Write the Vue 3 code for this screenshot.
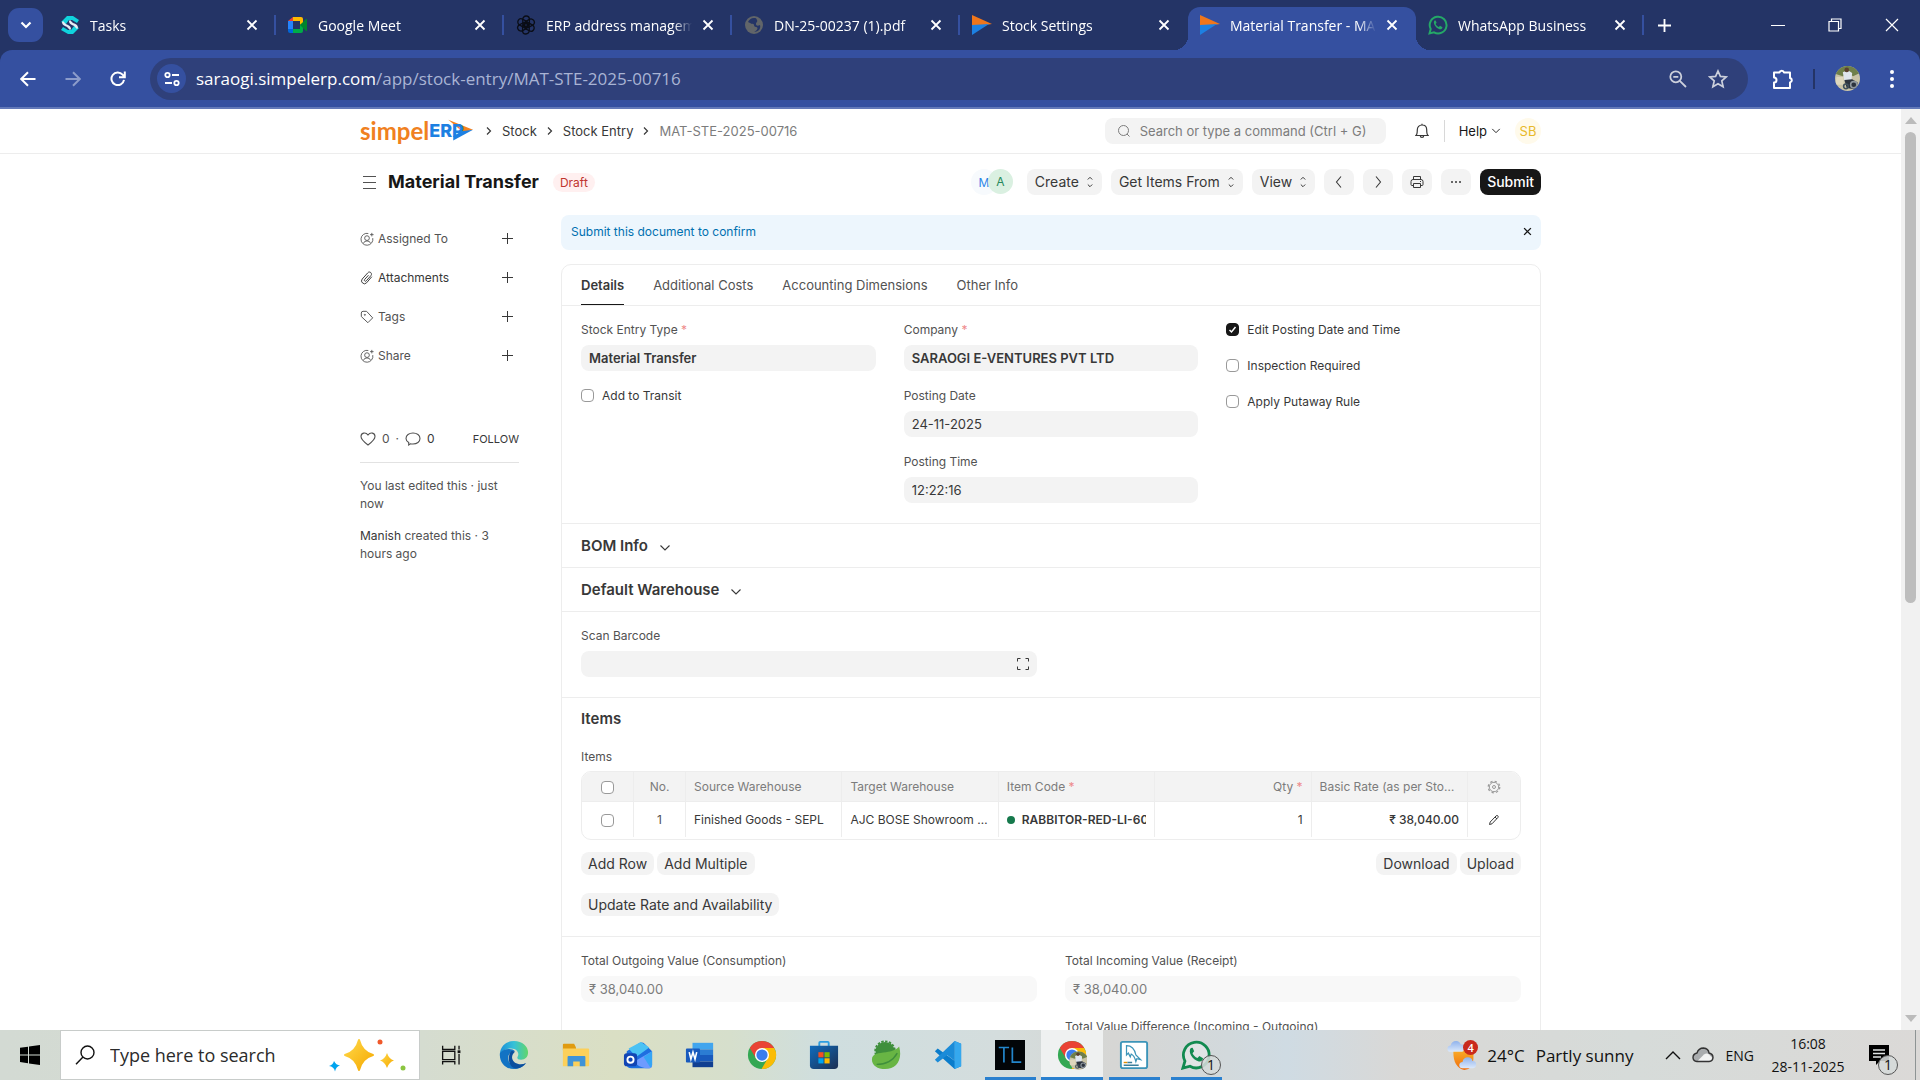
<script setup>
import { ref } from 'vue'

const browserTabs = [
  { icon: 'tasks', title: 'Tasks' },
  { icon: 'meet', title: 'Google Meet' },
  { icon: 'gpt', title: 'ERP address management' },
  { icon: 'globe', title: 'DN-25-00237 (1).pdf' },
  { icon: 'play', title: 'Stock Settings', last: true },
  { icon: 'play', title: 'Material Transfer - MAT-STE', active: true },
  { icon: 'whatsapp', title: 'WhatsApp Business' },
]

const sidebar = [
  { icon: 'assign', label: 'Assigned To' },
  { icon: 'clip', label: 'Attachments', strong: true },
  { icon: 'tag', label: 'Tags' },
  { icon: 'assign', label: 'Share' },
]

const formTabs = ['Details', 'Additional Costs', 'Accounting Dimensions', 'Other Info']
const menus = ['Create', 'Get Items From', 'View']
const tools = [
  { icon: 'left', label: 'Previous' },
  { icon: 'right', label: 'Next' },
  { icon: 'print', label: 'Print' },
  { icon: 'dots', label: 'Menu' },
]

const checks = ref([
  { id: 'edit-posting', label: 'Edit Posting Date and Time', on: true },
  { id: 'inspection', label: 'Inspection Required', on: false },
  { id: 'putaway', label: 'Apply Putaway Rule', on: false },
])

const apps = [
  { icon: 'taskview', label: 'Task View' },
  { icon: 'edge', label: 'Edge' },
  { icon: 'folder', label: 'File Explorer' },
  { icon: 'outlook', label: 'Outlook' },
  { icon: 'word', label: 'Word' },
  { icon: 'chrome', label: 'Chrome' },
  { icon: 'store', label: 'Store' },
  { icon: 'spring', label: 'Spring' },
  { icon: 'vscode', label: 'VS Code' },
  { icon: 'tl', label: 'TL', open: true },
  { icon: 'chromeuser', label: 'Chrome profile', open: true, active: true },
  { icon: 'mysql', label: 'MySQL Installer', open: true },
  { icon: 'whatsappfill', label: 'WhatsApp', open: true, count: 1 },
]

const entryType = ref('Material Transfer')
const company = ref('SARAOGI E-VENTURES PVT LTD')
const postingDate = ref('24-11-2025')
const postingTime = ref('12:22:16')
const barcode = ref('')
</script>

<template>
  <div class="screen">
    <svg class="sprite" aria-hidden="true">
      <defs>
        <linearGradient id="g-edge" x1="0" y1="0" x2="1" y2="0"><stop offset="0" stop-color="#1b8fd8" /><stop offset="0.5" stop-color="#35c1d8" /><stop offset="1" stop-color="#62d66a" /></linearGradient>
        <linearGradient id="g-spark" x1="0" y1="0" x2="1" y2="1"><stop offset="0" stop-color="#ffd94a" /><stop offset="1" stop-color="#f5a800" /></linearGradient>
        <linearGradient id="g-store" x1="0" y1="0" x2="1" y2="1"><stop offset="0" stop-color="#0f6cbd" /><stop offset="1" stop-color="#1d2f52" /></linearGradient>
        <linearGradient id="g-sun" x1="0" y1="0" x2="0" y2="1"><stop offset="0" stop-color="#fbb62d" /><stop offset="1" stop-color="#ef6c0c" /></linearGradient>
        <linearGradient id="g-cloud" x1="0" y1="0" x2="0" y2="1"><stop offset="0" stop-color="#8fb2ec" /><stop offset="1" stop-color="#dce9fb" /></linearGradient>
        <clipPath id="c-face"><circle cx="16" cy="16" r="16" /></clipPath>
      </defs>
      <symbol id="i-tasks" viewBox="0 0 20 20"><path d="M1 7 7 1h6l6 4-2 3-5-3H9L6 9z" fill="#10d3dd" /><path d="m19 13-6 6H8l-7-4 2-3 5 3h3l3-4z" fill="#10d3dd" /><path d="M2 7c0 3 3 4 5 5l3 3 1-1c0-3-3-4-5-5L3 6zM18 13c0-3-2-4-5-5l-3-3-1 1c0 3 3 4 5 5l3 3z" fill="#e8ecf4" /></symbol>
      <symbol id="i-meet" viewBox="0 0 20 20"><path d="M5 2h8q2 0 2 2v4l-3 2V6H5z" fill="#ffba00" /><path d="m5 2-5 4h5z" fill="#ea4335" /><path d="M0 6h5v8H0z" fill="#2684fc" /><path d="M0 14h5v4H2q-2 0-2-2z" fill="#0066da" /><path d="M5 14h7v-4l3-2v8q0 2-2 2H5z" fill="#00ac47" /><path d="m12 10 6-6q1-.5 1 .5v11q0 1-1 .5z" fill="#00832d" /></symbol>
      <symbol id="i-gpt" viewBox="0 0 20 20"><g fill="none" stroke="#0a0d16" stroke-width="1.300"><rect id="loop" x="6.800" y="1" width="6.600" height="10.500" rx="3.300" /><use href="#loop" transform="rotate(60 10 10)" /><use href="#loop" transform="rotate(120 10 10)" /><use href="#loop" transform="rotate(180 10 10)" /><use href="#loop" transform="rotate(240 10 10)" /><use href="#loop" transform="rotate(300 10 10)" /></g></symbol>
      <symbol id="i-globe" viewBox="0 0 20 20"><circle cx="10" cy="10" r="9" fill="#616569" /><path d="M10 3c-3 0-5 2-6 4l4 2c3-1 1 3 4 3s1 4-2 5c5 0 7-4 6-7-2 1-4 1-4-1s2-2 1-4-1-2-3-2z" fill="#243466" /></symbol>
      <symbol id="i-play" viewBox="0 0 20 20"><path d="M0 0v12l20-3z" fill="#f0761b" /><path d="M0 10v10L17 9z" fill="#1d80e2" /></symbol>
      <symbol id="i-whatsapp" viewBox="0 0 20 20"><path d="m1.500 18.500 1.200-4.500A8.400 8.400 0 1 1 6 17.400z" fill="none" stroke="#25a867" stroke-width="2" /><path d="M6.500 5.500C4.500 8 7.500 13 11.500 14.200c1.500.4 3-.8 3-2l-2.500-1.400-1.200 1.300c-1.500-.6-2.500-1.700-3.200-3.100l1-1.200-1-2.400z" fill="#25a867" /></symbol>
      <symbol id="i-whatsappfill" viewBox="0 0 32 32"><path d="m2 30 2.200-7.500A13.700 13.700 0 1 1 9.600 28z" fill="#fff" fill-opacity="0.300" stroke="#128a50" stroke-width="3" /><path d="M10.500 8.500c-3.500 4 1.500 12.500 8.500 14.300 2.500.5 4.500-1.300 4.500-3.300L19.600 17l-2 2.200c-2.600-1-4.300-2.900-5.300-5.100l1.700-2-1.600-3.800z" fill="#128a50" /></symbol>

      <symbol id="i-close" viewBox="0 0 12 12"><path d="m1.500 1.500 9 9m0-9-9 9" fill="none" stroke="currentColor" stroke-width="1.800" /></symbol>
      <symbol id="i-thinclose" viewBox="0 0 14 14"><path d="m1 1 12 12M13 1 1 13" fill="none" stroke="currentColor" stroke-width="1.200" /></symbol>
      <symbol id="i-restore" viewBox="0 0 14 14"><path d="M1 3.500h9.500V13H1zM3.500 3.500V1H13v9.500h-2.500" fill="none" stroke="currentColor" stroke-width="1.200" /></symbol>
      <symbol id="i-down" viewBox="0 0 12 12"><path d="m1.500 3.500 4.500 4.500 4.500-4.500" fill="none" stroke="currentColor" stroke-width="1.100" /></symbol>
      <symbol id="i-downbold" viewBox="0 0 12 12"><path d="m1.500 3.500 4.500 4.500 4.500-4.500" fill="none" stroke="currentColor" stroke-width="2.200" /></symbol>
      <symbol id="i-plus" viewBox="0 0 13 13"><path d="M6.500 1v11M1 6.500h11" fill="none" stroke="currentColor" /></symbol>
      <symbol id="i-plusbold" viewBox="0 0 14 14"><path d="M7 0v14M0 7h14" fill="none" stroke="currentColor" stroke-width="2" /></symbol>
      <symbol id="i-back" viewBox="0 0 16 16"><path d="M15.500 8H1.500M8 1.200 1.200 8 8 14.800" fill="none" stroke="currentColor" stroke-width="2" /></symbol>
      <symbol id="i-forward" viewBox="0 0 16 16"><path d="M.5 8h14M8 1.200 14.800 8 8 14.800" fill="none" stroke="currentColor" stroke-width="2" /></symbol>
      <symbol id="i-reload" viewBox="0 0 16 16"><path d="M14 8.800A6.300 6.300 0 1 1 12.600 3.700L14 5.200M14.800.5v5.800H9" fill="none" stroke="currentColor" stroke-width="2" /></symbol>
      <symbol id="i-tune" viewBox="0 0 16 16"><g fill="none" stroke="currentColor" stroke-width="1.800"><circle cx="3.500" cy="4" r="2.200" /><path d="M8 4h7M1 12h7" /><circle cx="12.500" cy="12" r="2.200" /></g></symbol>
      <symbol id="i-zoomout" viewBox="0 0 18 18"><g fill="none" stroke="currentColor" stroke-width="1.800"><circle cx="6.800" cy="6.800" r="5.500" /><path d="m10.800 10.800 6.200 6.200M4.300 6.800h5" /></g></symbol>
      <symbol id="i-star" viewBox="0 0 20 20"><path d="m10 2 2.400 5.400 5.800.6-4.400 3.900 1.300 5.800L10 14.700l-5.100 3 1.300-5.800L1.800 8l5.800-.6z" fill="none" stroke="currentColor" stroke-width="1.700" /></symbol>
      <symbol id="i-puzzle" viewBox="0 0 22 22"><path d="M2 4.500h5.500a2.300 2.300 0 0 1 4.500 0h6V10a2.300 2.300 0 0 1 0 4.500V20H2v-5.500a2.500 2.500 0 0 0 0-5z" fill="none" stroke="currentColor" stroke-width="2" stroke-linejoin="round" /></symbol>
      <symbol id="i-kebab" viewBox="0 0 6 20"><g fill="currentColor"><circle cx="3" cy="3" r="2" /><circle cx="3" cy="10" r="2" /><circle cx="3" cy="17" r="2" /></g></symbol>
      <symbol id="i-face" viewBox="0 0 32 32"><g clip-path="url(#c-face)"><rect width="32" height="32" fill="#c9c3a6" /><path d="M0 0h32v9l-9 4-7-5-6 5L0 10z" fill="#6f7f4a" /><path d="M2 14h9v10H0z" fill="#ded7bd" /><path d="m10 8 6-3 6 4-1 9-9 1z" fill="#dfe5ee" /><circle cx="15" cy="5" r="3" fill="#5a4030" /><path d="m12 18 10-1 7 4-2 9-12-2z" fill="#2c333e" /><circle cx="24" cy="24" r="4" fill="none" stroke="#8e979e" stroke-width="2" /><circle cx="14" cy="26" r="3" fill="none" stroke="#40505c" stroke-width="2" /></g></symbol>

      <symbol id="i-logo" viewBox="0 0 34 26"><path d="M4 0 34 12 22 15z" fill="#f58220" /><path d="M20 14 34 12 10 25V20z" fill="#1d80e2" /></symbol>
      <symbol id="i-chev" viewBox="0 0 8 12"><path d="m2 2.500 3.500 3.500L2 9.500" fill="none" stroke="currentColor" stroke-width="1.200" /></symbol>
      <symbol id="i-search" viewBox="0 0 14 14"><g fill="none" stroke="currentColor"><circle cx="6.500" cy="6.500" r="5" /><path d="m10 10 2.500 2.500" /></g></symbol>
      <symbol id="i-bell" viewBox="0 0 14 16"><path d="M1 12.500h12c-1.200-1-1.300-2.500-1.300-5.700C11.700 4 9.800 2 7 2S2.300 4 2.300 6.800c0 3.200-.1 4.700-1.300 5.700zM5.300 12.800c0 2.200 3.400 2.200 3.400 0M7 2V.8" fill="none" stroke="currentColor" stroke-width="1.200" /></symbol>
      <symbol id="i-select" viewBox="0 0 8 12"><path d="M1.800 3.500 4 1.300 6.200 3.500M1.800 8.500 4 10.700 6.200 8.500" fill="none" stroke="currentColor" /></symbol>
      <symbol id="i-left" viewBox="0 0 14 14"><path d="M9 1.500 4.500 7 9 12.500" fill="none" stroke="currentColor" stroke-width="1.100" /></symbol>
      <symbol id="i-right" viewBox="0 0 14 14"><path d="M5 1.500 9.500 7 5 12.500" fill="none" stroke="currentColor" stroke-width="1.100" /></symbol>
      <symbol id="i-print" viewBox="0 0 14 14"><path d="M3.500 4.500v-3h7v3M3.500 10.500H1.800Q1 10.500 1 9.500v-3q0-2 2-2h8q2 0 2 2v3q0 1-.8 1h-1.700M3.500 8.500h7v4h-7zM10 6.500h1" fill="none" stroke="currentColor" /></symbol>
      <symbol id="i-dots" viewBox="0 0 14 14"><g fill="currentColor"><circle cx="3" cy="7" r="1" /><circle cx="7" cy="7" r="1" /><circle cx="11" cy="7" r="1" /></g></symbol>
      <symbol id="i-assign" viewBox="0 0 16 16"><g fill="none" stroke="currentColor"><path d="M14.600 7A6.800 6.800 0 1 1 9.500 1.700M4 13q.5-2.800 4-2.800t4 2.800M13.500 1v4M11.500 3h4" /><circle cx="8" cy="7" r="2.700" /></g></symbol>
      <symbol id="i-clip" viewBox="0 0 16 16"><path d="m13.500 6.500-6 7a3.300 3.300 0 0 1-5-4.300l6.300-7a2.300 2.300 0 0 1 4 .3c.6 1 .3 2-.3 2.700l-5.300 6a1.200 1.200 0 0 1-2-1.400l4.500-5" fill="none" stroke="currentColor" stroke-width="1.100" /></symbol>
      <symbol id="i-tag" viewBox="0 0 16 16"><path d="M1.500 3.500q0-2 2-2h4l7 7.500-5.500 5.500-7.500-7zM5.500 5a.6.600 0 1 0 .1 0z" fill="none" stroke="currentColor" stroke-width="1.100" /></symbol>
      <symbol id="i-heart" viewBox="0 0 16 14"><path d="M8 13C4 10 1 7.500 1 4.500 1 1 5.500-.5 8 3c2.500-3.500 7-2 7 1.500 0 3-3 5.500-7 8.500z" fill="none" stroke="currentColor" stroke-width="1.100" /></symbol>
      <symbol id="i-comment" viewBox="0 0 16 14"><path d="M3.700 13v-2.600C2 9.500 1 8 1 6.500 1 3.300 4 1 8 1s7 2.300 7 5.500S12 12 8 12c-.8 0-2 0-2.600-.2z" fill="none" stroke="currentColor" stroke-width="1.100" /></symbol>
      <symbol id="i-scan" viewBox="0 0 14 14"><path d="M1.500 4.500v-3h3M9.500 1.500h3v3M12.500 9.500v3h-3M4.500 12.500h-3v-3" fill="none" stroke="currentColor" /></symbol>
      <symbol id="i-gear" viewBox="0 0 14 14"><g fill="none" stroke="currentColor"><circle cx="7" cy="7" r="4.700" /><circle cx="7" cy="7" r="5.800" stroke-width="1.200" stroke-dasharray="2.300 2.250" /><circle cx="7" cy="7" r="1.500" /></g></symbol>
      <symbol id="i-pencil" viewBox="0 0 12 12"><path d="M1.500 10.500 2.200 8l6-6.200q.8-.7 1.600 0t.1 1.700L4 9.800zM7 3l2 2" fill="none" stroke="currentColor" /></symbol>

      <symbol id="i-windows" viewBox="0 0 20 20"><path d="M0 2.800 8 1.700v7.700H0zM9 1.500 20 0v9.400H9zM0 10.400h8v7.800L0 17zM9 10.400h11V20L9 18.400z" fill="#000" /></symbol>
      <symbol id="i-bigsearch" viewBox="0 0 20 20"><g fill="none" stroke="#111" stroke-width="1.400"><circle cx="12.500" cy="7.500" r="6.500" /><path d="M8 12 1 19.300" /></g></symbol>
      <symbol id="i-sparkle" viewBox="0 0 78 34"><path d="M30 2q3 12 14 15-11 3-14 15-3-12-14-15 11-3 14-15z" fill="url(#g-spark)" stroke="url(#g-spark)" stroke-width="2" stroke-linejoin="round" /><path d="M58 15q2 6 7 7.500-5 1.500-7 7.500-2-6-7-7.500 5-1.500 7-7.500z" fill="url(#g-spark)" /><path d="M5 23q2 4 6 4.500-4 1-5 6-1-5-6-5.500 4-1 5-5z" fill="#00a4ef" /><circle cx="51" cy="4" r="2.500" fill="#f0592b" /><circle cx="74" cy="30" r="2.500" fill="#8bc540" /></symbol>
      <symbol id="i-taskview" viewBox="0 0 32 32"><g fill="none" stroke="#111" stroke-width="1.400"><path d="M6 6v4h13V6M6 26v-3h13v3M6 12h13v9H6zM23.500 6v4M23.500 15v11" /></g><path d="M22 11h3v3h-3z" fill="#111" /></symbol>
      <symbol id="i-edge" viewBox="0 0 32 32"><path d="M1 14C2 6 8 1 16 1c9 0 15 6 15 12 0 5-3 8-7.500 8-4 0-4.500-2-3.500-3.500C22 14 19 9 13 9 7 9 2 12 1 17z" fill="url(#g-edge)" /><path d="M1 14c3-5 13-6 16-2-5 0-8 4-7 9 1 6 8 9 18 4-3 4-7 6-12 6C7 31 0 24 1 14z" fill="#1273c4" /><path d="M13 12c-4 4-4 17 5 18.500 5-.5 9-3 11-6-6 3-14 1-15-5-.4-3 1-5 3-7-1-1-3-1-4-.5z" fill="#0b4f9e" /></symbol>
      <symbol id="i-folder" viewBox="0 0 32 32"><path d="M2 5q0-1 1-1h11l2 4v3H2z" fill="#e09b10" /><path d="M2 9h27q1 0 1 1v17q0 1-1 1H2z" fill="#fcd05a" /><path d="M7 28V18q0-1 1-1h17q1 0 1 1v10h-6v-5h-7v5z" fill="#3f93d8" /></symbol>
      <symbol id="i-outlook" viewBox="0 0 32 32"><path d="m4 12 14-9q3-1 5 1l8 8v15q0 3-3 3H9q-5 0-5-4z" fill="#1d6fe0" /><path d="m6 9 13-7 9 6-14 10z" fill="#4ac2f4" /><path d="m31 12-19 11q4 6 12 7h4q3 0 3-3z" fill="#6e9bff" /><path d="m31 12-9 6 7 11q2-1 2-3z" fill="#35a5f5" /><rect x="1" y="14" width="14" height="14" rx="3" fill="#1245b4" /><circle cx="8" cy="21" r="3.300" fill="none" stroke="#fff" stroke-width="2" /></symbol>
      <symbol id="i-word" viewBox="0 0 32 32"><path d="M8 3h22v7H8z" fill="#41a5ee" /><path d="M8 10h22v6H8z" fill="#2b7cd3" /><path d="M8 16h22v7H8z" fill="#185abd" /><path d="M8 23h22v6H8z" fill="#103f91" /><rect x="1" y="9" width="15" height="15" rx="1" fill="#185abd" /><path d="m4.500 13 1.800 7.500L8.500 13l2.200 7.500 1.800-7.500" fill="none" stroke="#fff" stroke-width="1.700" /></symbol>
      <symbol id="i-chrome" viewBox="0 0 32 32"><circle cx="16" cy="16" r="15" fill="#34a853" /><path d="M3 8.500A15 15 0 0 1 29 8.500H16l-6.500 11z" fill="#ea4335" /><path d="M29 8.500A15 15 0 0 1 15.500 31L22.500 19 16 8.500z" fill="#fbbc05" /><circle cx="16" cy="16" r="7.500" fill="#fff" /><circle cx="16" cy="16" r="6" fill="#3b7ded" /></symbol>
      <symbol id="i-chromeuser" viewBox="0 0 32 32"><use href="#i-chrome" width="32" height="32" /><use href="#i-face" x="13" y="12" width="20" height="20" /></symbol>
      <symbol id="i-store" viewBox="0 0 32 32"><path d="M11 7V3q0-1 1-1h8q1 0 1 1v4" fill="none" stroke="#2c9de0" stroke-width="2" /><path d="M1 6h30v21q0 4-4 4H5q-4 0-4-4z" fill="url(#g-store)" /><path d="M10 13h5.500v5.500H10z" fill="#f25022" /><path d="M16.500 13H22v5.500h-5.500z" fill="#7fba00" /><path d="M10 19.500h5.500V25H10z" fill="#00a4ef" /><path d="M16.500 19.500H22V25h-5.500z" fill="#ffb900" /></symbol>
      <symbol id="i-spring" viewBox="0 0 32 32"><circle cx="15" cy="12" r="10" fill="#3f8f3c" /><circle cx="15" cy="12" r="10.500" fill="none" stroke="#3f8f3c" stroke-width="2" stroke-dasharray="2.600 1.500" /><path d="M30 7c4 14-3 24-15 24C7 31 1 27 1 21c0-7 7-7 15-8 6-1 11-2 14-6z" fill="#68b544" /><path d="M6 26c9 0 17-3 22-12" fill="none" stroke="#3f8f3c" stroke-width="1.500" /></symbol>
      <symbol id="i-vscode" viewBox="0 0 32 32"><path d="m23 1 7 3v24l-7 3L2 12l3-3 18 13z" fill="#0a7ccb" /><path d="m23 1 7 3v24l-7 3z" fill="#35a8ee" /><path d="M23 10v12l-8-6zM23 1v9L5 24l-3-3z" fill="#1b8bd8" /></symbol>
      <symbol id="i-tl" viewBox="0 0 32 32"><path d="M0 0h32v32H0z" fill="#020508" /><path d="M4 8h11M9.500 8v16M18.500 8v15.500H28" fill="none" stroke="#2386cc" stroke-width="1.800" /></symbol>
      <symbol id="i-mysql" viewBox="0 0 32 32"><rect x="2" y="2" width="28" height="28" rx="2" fill="#fff" stroke="#3c94b8" stroke-width="2" /><path d="M8 16V6c6 0 9 5 10 10l5 5-4-1-1 3c-1-4-3-7-5-8l-1 3-2-4z" fill="none" stroke="#3c94b8" stroke-width="1.300" /><path d="M5 24h4" stroke="#e48e00" stroke-width="1.500" /><path d="M9 24h5M5 27h16" stroke="#3c7f9c" stroke-width="1.500" /></symbol>
      <symbol id="i-weather" viewBox="0 0 34 34"><path d="M7 8h22v12q0 12-10 13Q7 30 7 14z" fill="url(#g-sun)" /><path d="M4 13q-4 0-3.500-4Q1 6 4 6q1-5 6-5 4 0 5 4 4-1 4 4 0 4-4 4z" fill="url(#g-cloud)" /><path d="M17 31q-4 0-3.500-4 .5-3 3.500-3 1-5 6-5 4 0 5 4 4 0 4 4t-4 4z" fill="url(#g-cloud)" /></symbol>
      <symbol id="i-caret" viewBox="0 0 16 10"><path d="m1 9 7-7 7 7" fill="none" stroke="#111" stroke-width="1.400" /></symbol>
      <symbol id="i-cloud" viewBox="0 0 22 16"><path d="M5 14.500q-4-.5-4-4T5 6q1.500-5 6.500-5 5 .5 5.500 5 4 1 4 4.500t-4 4z" fill="#a9acae" stroke="#333" stroke-width="1.400" /><path d="m6 13.500 6-6q3-2 5 0l3 3q0 3-3 3z" fill="#f2f3f3" /></symbol>
      <symbol id="i-note" viewBox="0 0 20 20"><path d="M0 0h20v16h-9l-4 4v-4H0z" fill="#000" /><path d="M4 5h12M4 8.500h12M4 12h8" stroke="#e0e4e4" stroke-width="1.300" /></symbol>
    </svg>

    <header class="browser">
      <div class="strip">
        <button class="tab-search" aria-label="Search tabs"><svg width="12" height="12"><use href="#i-downbold" /></svg></button>
        <nav class="tabs" aria-label="Browser tabs">
          <div v-for="(t, i) in browserTabs" :key="i" class="tab" :class="{ active: t.active, last: t.last }">
            <svg width="20" height="20"><use :href="'#i-' + t.icon" /></svg>
            <span class="tab-title">{{ t.title }}</span>
            <button class="plain" aria-label="Close tab"><svg width="12" height="12"><use href="#i-close" /></svg></button>
          </div>
        </nav>
        <button class="plain new-tab" aria-label="New tab"><svg width="13" height="13"><use href="#i-plusbold" /></svg></button>
        <div class="window-controls">
          <button class="plain" aria-label="Minimize"><span class="dash"></span></button>
          <button class="plain" aria-label="Restore"><svg width="14" height="14"><use href="#i-restore" /></svg></button>
          <button class="plain" aria-label="Close window"><svg width="14" height="14"><use href="#i-thinclose" /></svg></button>
        </div>
      </div>
      <div class="toolbar">
        <button class="plain nav-btn" aria-label="Back"><svg width="16" height="16"><use href="#i-back" /></svg></button>
        <button class="plain nav-btn dim" aria-label="Forward"><svg width="16" height="16"><use href="#i-forward" /></svg></button>
        <button class="plain nav-btn" aria-label="Reload"><svg width="16" height="16"><use href="#i-reload" /></svg></button>
        <div class="omnibox">
          <button class="site" aria-label="Site information"><svg width="16" height="16"><use href="#i-tune" /></svg></button>
          <span class="url"><b>saraogi.simpelerp.com</b>/app/stock-entry/MAT-STE-2025-00716</span>
          <button class="plain omni-icon" aria-label="Zoom"><svg width="18" height="18"><use href="#i-zoomout" /></svg></button>
          <button class="plain omni-icon" aria-label="Bookmark"><svg width="20" height="20"><use href="#i-star" /></svg></button>
        </div>
        <button class="plain ext" aria-label="Extensions"><svg width="22" height="22"><use href="#i-puzzle" /></svg></button>
        <span class="bar"></span>
        <button class="plain me" aria-label="Profile"><svg width="25" height="25"><use href="#i-face" /></svg></button>
        <button class="plain kebab" aria-label="More"><svg width="6" height="20"><use href="#i-kebab" /></svg></button>
      </div>
    </header>

    <div class="viewport">
      <div class="page">
        <div class="navbar">
          <div class="wrap navbar-in">
            <a class="logo" href="#"><span class="simpel">simpel</span><span class="erp">ERP</span><svg width="28" height="23"><use href="#i-logo" /></svg></a>
            <nav class="crumbs" aria-label="Breadcrumb">
              <svg width="8" height="12"><use href="#i-chev" /></svg><a href="#">Stock</a>
              <svg width="8" height="12"><use href="#i-chev" /></svg><a href="#">Stock Entry</a>
              <svg width="8" height="12"><use href="#i-chev" /></svg><a href="#" class="here">MAT-STE-2025-00716</a>
            </nav>
            <div class="search">
              <svg width="14" height="14"><use href="#i-search" /></svg>
              <input type="text" aria-label="Search" placeholder="Search or type a command (Ctrl + G)" />
            </div>
            <button class="plain bell" aria-label="Notifications"><svg width="14" height="16"><use href="#i-bell" /></svg></button>
            <button class="plain help">Help <svg width="10" height="10"><use href="#i-down" /></svg></button>
            <span class="avatar sb">SB</span>
          </div>
        </div>

        <div class="wrap head">
          <button class="plain burger" aria-label="Toggle sidebar"><i></i><i></i><i></i></button>
          <h1>Material Transfer</h1>
          <span class="badge">Draft</span>
          <div class="actions">
            <div class="viewers"><span class="avatar m">M</span><span class="avatar a">A</span></div>
            <button v-for="m in menus" :key="m" class="btn">{{ m }} <svg width="8" height="12"><use href="#i-select" /></svg></button>
            <button v-for="t in tools" :key="t.icon" class="btn square" :aria-label="t.label"><svg width="14" height="14"><use :href="'#i-' + t.icon" /></svg></button>
            <button class="btn primary">Submit</button>
          </div>
        </div>

        <div class="wrap body">
          <aside class="side">
            <ul class="side-list">
              <li v-for="s in sidebar" :key="s.label" :class="{ strong: s.strong }">
                <svg width="14" height="14"><use :href="'#i-' + s.icon" /></svg>
                <span>{{ s.label }}</span>
                <button class="plain" :aria-label="'Add ' + s.label"><svg width="13" height="13"><use href="#i-plus" /></svg></button>
              </li>
            </ul>
            <div class="social">
              <svg width="16" height="14"><use href="#i-heart" /></svg><span>0</span><span>·</span>
              <svg width="16" height="14"><use href="#i-comment" /></svg><span class="dark">0</span>
              <a href="#">FOLLOW</a>
            </div>
            <p>You last edited this · just now</p>
            <p><b>Manish</b> created this · 3 hours ago</p>
          </aside>

          <main class="main">
            <div class="alert">
              <span>Submit this document to confirm</span>
              <button class="plain" aria-label="Dismiss"><svg width="9" height="9"><use href="#i-close" /></svg></button>
            </div>
            <form class="card" @submit.prevent>
              <div class="form-tabs">
                <a v-for="(t, i) in formTabs" :key="t" href="#" :class="{ on: i === 0 }">{{ t }}</a>
              </div>

              <section class="section cols three">
                <div class="col">
                  <div class="field">
                    <label for="entry-type">Stock Entry Type <em>*</em></label>
                    <input id="entry-type" v-model="entryType" class="control strong" type="text" />
                  </div>
                  <div class="check"><input id="transit" type="checkbox" /><label for="transit">Add to Transit</label></div>
                </div>
                <div class="col">
                  <div class="field">
                    <label for="company">Company <em>*</em></label>
                    <input id="company" v-model="company" class="control strong" type="text" />
                  </div>
                  <div class="field">
                    <label for="pdate">Posting Date</label>
                    <input id="pdate" v-model="postingDate" class="control" type="text" />
                  </div>
                  <div class="field">
                    <label for="ptime">Posting Time</label>
                    <input id="ptime" v-model="postingTime" class="control" type="text" />
                  </div>
                </div>
                <div class="col">
                  <div v-for="c in checks" :key="c.id" class="check">
                    <input :id="c.id" v-model="c.on" type="checkbox" /><label :for="c.id">{{ c.label }}</label>
                  </div>
                </div>
              </section>

              <section class="section fold"><h2>BOM Info</h2><svg width="12" height="12"><use href="#i-down" /></svg></section>
              <section class="section fold"><h2>Default Warehouse</h2><svg width="12" height="12"><use href="#i-down" /></svg></section>

              <section class="section cols">
                <div class="col">
                  <div class="field">
                    <label for="barcode">Scan Barcode</label>
                    <div class="control scan">
                      <input id="barcode" v-model="barcode" type="text" />
                      <button class="plain" type="button" aria-label="Scan"><svg width="14" height="14"><use href="#i-scan" /></svg></button>
                    </div>
                  </div>
                </div>
                <div class="col"></div>
              </section>

              <section class="section items">
                <h2>Items</h2>
                <p class="grid-label">Items</p>
                <div class="grid">
                  <table>
                    <colgroup><col class="c-edge" /><col class="c-edge" /><col /><col /><col /><col /><col /><col class="c-edge" /></colgroup>
                    <thead>
                      <tr>
                        <th class="mid"><input type="checkbox" aria-label="Select all rows" /></th>
                        <th class="mid">No.</th>
                        <th>Source Warehouse</th>
                        <th>Target Warehouse</th>
                        <th>Item Code <em>*</em></th>
                        <th class="num">Qty <em>*</em></th>
                        <th>Basic Rate (as per Stock UOM)</th>
                        <th class="mid"><svg class="gear" width="14" height="14"><use href="#i-gear" /></svg></th>
                      </tr>
                    </thead>
                    <tbody>
                      <tr>
                        <td class="mid"><input type="checkbox" aria-label="Select row 1" /></td>
                        <td class="mid soft">1</td>
                        <td>Finished Goods - SEPL</td>
                        <td>AJC BOSE Showroom - SEPL</td>
                        <td><div class="code"><i></i>RABBITOR-RED-LI-60V</div></td>
                        <td class="num">1</td>
                        <td class="num rate">₹ 38,040.00</td>
                        <td class="mid"><svg width="12" height="12"><use href="#i-pencil" /></svg></td>
                      </tr>
                    </tbody>
                  </table>
                </div>
                <div class="row-actions">
                  <button class="btn small">Add Row</button>
                  <button class="btn small">Add Multiple</button>
                  <button class="btn small push">Download</button>
                  <button class="btn small">Upload</button>
                </div>
                <button class="btn small">Update Rate and Availability</button>
              </section>

              <section class="section cols">
                <div class="col">
                  <div class="field">
                    <label for="outgoing">Total Outgoing Value (Consumption)</label>
                    <input id="outgoing" class="control ro" type="text" value="₹ 38,040.00" readonly />
                  </div>
                </div>
                <div class="col">
                  <div class="field">
                    <label for="incoming">Total Incoming Value (Receipt)</label>
                    <input id="incoming" class="control ro" type="text" value="₹ 38,040.00" readonly />
                  </div>
                  <div class="field">
                    <label for="diff">Total Value Difference (Incoming - Outgoing)</label>
                    <input id="diff" class="control ro" type="text" value="₹ 0.00" readonly />
                  </div>
                </div>
              </section>
            </form>
          </main>
        </div>
      </div>
      <div class="scrollbar" aria-hidden="true"><span class="arrow up"></span><span class="thumb"></span><span class="arrow down"></span></div>
    </div>

    <footer class="taskbar">
      <button class="plain start" aria-label="Start"><svg width="20" height="20"><use href="#i-windows" /></svg></button>
      <label class="win-search">
        <svg width="20" height="20"><use href="#i-bigsearch" /></svg>
        <input type="text" aria-label="Type here to search" placeholder="Type here to search" />
        <svg width="78" height="34"><use href="#i-sparkle" /></svg>
      </label>
      <button v-for="a in apps" :key="a.icon" class="app" :class="{ open: a.open, active: a.active }" :aria-label="a.label">
        <svg width="30" height="30"><use :href="'#i-' + a.icon" /></svg>
        <span v-if="a.count" class="count">{{ a.count }}</span>
      </button>
      <div class="tray">
        <div class="weather"><svg width="31" height="31"><use href="#i-weather" /></svg><span class="red">4</span></div>
        <span class="temp">24°C</span>
        <span class="temp sky">Partly sunny</span>
        <svg class="caret" width="16" height="10"><use href="#i-caret" /></svg>
        <svg width="22" height="16"><use href="#i-cloud" /></svg>
        <span class="lang">ENG</span>
        <div class="clock"><span>16:08</span><span>28-11-2025</span></div>
        <div class="note"><svg width="20" height="20"><use href="#i-note" /></svg><span class="count">1</span></div>
        <span class="peek"></span>
      </div>
    </footer>
  </div>
</template>

<style>
body { margin: 0; }
</style>

<style scoped>
* { box-sizing: border-box; }
svg { display: block; flex: none; }
button, input { font: inherit; color: inherit; }
a { color: inherit; text-decoration: none; }
em { font-style: normal; color: #ee8a8a; }
.sprite { position: absolute; width: 0; height: 0; }
.plain { background: none; border: 0; padding: 0; display: flex; align-items: center; justify-content: center; }
.screen { height: 100vh; display: flex; flex-direction: column; overflow: hidden; background: #fff; }

/* browser frame */
.browser { flex: none; background: #243466; color: #fff; font-family: "Open Sans", "Noto Sans", sans-serif; }
.strip { height: 50px; display: flex; align-items: center; padding-left: 8px; }
.tab-search { flex: none; width: 35px; height: 34px; border: 0; border-radius: 11px; background: #3550a0; display: flex; align-items: center; justify-content: center; margin-right: 5px; padding: 0; color: #fff; }
.tabs { display: flex; align-self: stretch; align-items: center; min-width: 0; }
.tab { position: relative; flex: 0 1 auto; width: 228px; height: 42px; display: flex; align-items: center; padding: 0 18px 0 12px; gap: 10px; font-size: 14px; min-width: 0; }
.tab::after { content: ""; position: absolute; right: 0; top: 11px; width: 2px; height: 20px; background: #3550a0; }
.tab.last::after, .tab.active::after { display: none; }
.tab.active { align-self: flex-end; height: 43px; padding-bottom: 7px; background: #3550a0; border-radius: 12px 12px 0 0; }
.tab.active::before { content: ""; position: absolute; left: -14px; right: -14px; bottom: 0; height: 14px; background: radial-gradient(circle at 0 0, transparent 14px, #3550a0 14px) left / 14px 14px no-repeat, radial-gradient(circle at 100% 0, transparent 14px, #3550a0 14px) right / 14px 14px no-repeat; }
.tab-title { flex: 1; min-width: 0; overflow: hidden; white-space: nowrap; mask-image: linear-gradient(to right, #000 calc(100% - 18px), transparent); }
.new-tab { margin-left: 14px; }
.window-controls { margin-left: auto; display: flex; align-self: stretch; }
.window-controls .plain { width: 57px; }
.dash { width: 14px; height: 1px; background: #fff; }
.toolbar { height: 59px; display: flex; align-items: center; padding: 0 10px 0 14px; background: #3550a0; border-bottom: 2px solid #6379b8; border-radius: 12px 12px 0 0; }
.nav-btn { width: 28px; margin-right: 17px; }
.dim { color: #8c9cca; }
.omnibox { flex: 1; height: 42px; border-radius: 21px; background: #2f407a; display: flex; align-items: center; padding: 0 20px 0 7px; margin: 0 24px 0 1px; min-width: 0; }
.site { width: 29px; height: 29px; border: 0; border-radius: 50%; padding: 0; background: #3550a0; display: flex; align-items: center; justify-content: center; margin-right: 10px; color: #fff; }
.url { flex: 1; font-size: 17px; color: #a9b4d4; white-space: nowrap; overflow: hidden; }
.url b { font-weight: 400; color: #fff; }
.omni-icon { color: #ccd0dc; margin-left: 21px; }
.bar { width: 2px; height: 20px; background: #243466; margin: 0 20px 0 19px; }
.kebab { margin: 0 15px 0 29px; }

/* page shell */
.viewport { flex: 1; min-height: 0; display: flex; font-family: Inter, "Liberation Sans", sans-serif; font-size: 13px; color: #383838; }
.page { flex: 1; min-width: 0; overflow: hidden; }
.wrap { max-width: 1181px; margin: 0 auto; }
.navbar { height: 45px; border-bottom: 1px solid #ededed; }
.navbar-in { display: flex; align-items: center; height: 100%; }
.logo { display: flex; align-items: center; font-family: Lato, sans-serif; position: relative; z-index: 0; width: 113px; height: 26px; }
.simpel { color: #f08020; font-size: 24px; font-weight: 700; line-height: 24px; }
.erp { color: #1d80e2; font-family: Inter, sans-serif; font-size: 18px; font-weight: 800; line-height: 24px; }
.logo svg { position: absolute; right: 0; top: 1px; z-index: -1; }
.crumbs { display: flex; align-items: center; gap: 9px; margin-left: 12px; color: #383838; white-space: nowrap; }
.here { color: #7c7c7c; }
.search { margin-left: auto; width: 281px; height: 26px; border-radius: 8px; background: #f3f3f3; display: flex; align-items: center; gap: 9px; padding: 0 12px; color: #7c7c7c; }
.search input { flex: 1; min-width: 0; border: 0; padding: 0; background: none; outline: 0; }
.search input::placeholder { color: #7c7c7c; opacity: 1; }
.bell { margin-left: 29px; padding-right: 15px; height: 22px; border-right: 1px solid #d8d8d8; }
.help { margin: 0 14px; gap: 4px; color: #171717; }
.avatar { width: 26px; height: 26px; border-radius: 50%; display: flex; align-items: center; justify-content: center; }
.sb { background: #fffaeb; color: #e8b92a; }
.head { display: flex; align-items: center; height: 56px; }
.burger { flex-direction: column; gap: 5px; width: 13px; margin: 0 12px 0 3px; }
.burger i { width: 13px; height: 1px; background: #525252; }
h1 { margin: 0; font-size: 18px; line-height: 24px; font-weight: 700; color: #171717; }
.badge { margin-left: 14px; height: 19px; line-height: 19px; padding: 0 7px; border-radius: 10px; background: #fff0f0; color: #c0352f; font-size: 12px; }
.actions { margin-left: auto; display: flex; align-items: center; gap: 9px; }
.viewers { display: flex; margin-right: 5px; font-size: 12px; }
.m { background: #f7fafd; color: #2a86e8; }
.a { background: #daf0e1; color: #27895c; margin-left: -9px; width: 25px; height: 25px; }
.btn { height: 26px; border: 0; border-radius: 8px; background: #f3f3f3; color: #383838; padding: 0 8px; font-size: 14px; line-height: 18px; display: flex; align-items: center; gap: 7px; white-space: nowrap; }
.square { width: 30px; }
.primary { background: #171717; color: #fff; font-weight: 500; padding: 0 7px; }

/* sidebar */
.body { display: flex; align-items: flex-start; padding-top: 5px; }
.side { width: 159px; flex: none; margin: 4px 42px 0 0; color: #525252; line-height: 18px; font-size: 12px; }
.side-list { list-style: none; margin: 0; padding: 0; }
.side-list li { display: flex; align-items: center; gap: 4px; height: 39px; }
.side-list .plain { margin: 0 5px 0 auto; color: #383838; }
.strong { color: #383838; }
.social { display: flex; align-items: center; gap: 6px; margin: 55px 0 14px; padding: 0 0 14px; border-bottom: 1px solid #e2e2e2; }
.social a { margin-left: auto; color: #383838; font-size: 11px; }
.dark { color: #383838; }
.side p { margin: 0 0 14px; }
.side p b { font-weight: 400; color: #383838; }

/* form */
.main { flex: 1; min-width: 0; }
.alert { height: 35px; border-radius: 8px; background: #edf6fd; color: #0070b0; display: flex; align-items: center; justify-content: space-between; padding: 0 9px 2px 10px; font-size: 12px; margin-bottom: 14px; }
.alert .plain { color: #171717; }
.card { border: 1px solid #ededed; border-radius: 10px 10px 0 0; }
.form-tabs { display: flex; gap: 29px; padding: 0 19px; height: 41px; border-bottom: 1px solid #ededed; color: #525252; }
.form-tabs a { display: flex; align-items: center; border-bottom: 1px solid transparent; }
.form-tabs .on { color: #383838; font-weight: 600; border-color: #171717; }
.section { border-bottom: 1px solid #ededed; padding: 0 19px; }
.cols { display: flex; gap: 28px; padding-top: 15px; padding-bottom: 20px; }
.col { flex: 1; min-width: 0; display: flex; flex-direction: column; gap: 16px; }
.field label { display: block; font-size: 12px; line-height: 18px; height: 24px; color: #525252; }
.control { display: block; width: 100%; height: 26px; border: 0; outline: 0; border-radius: 8px; background: #f3f3f3; padding: 0 8px; font-size: 13px; color: #383838; }
.control.strong { font-weight: 600; }
.control.ro { background: #f8f8f8; color: #7c7c7c; }
.scan { display: flex; align-items: center; padding-right: 7px; }
.scan input { flex: 1; min-width: 0; border: 0; outline: 0; background: none; }
.check { display: flex; align-items: center; gap: 8px; height: 16px; margin-bottom: 4px; font-size: 12px; }
input[type="checkbox"] { appearance: none; width: 13px; height: 13px; margin: 0; flex: none; border: 1px solid #999; border-radius: 4px; background: #fff; }
input[type="checkbox"]:checked { border-color: #171717; background: #171717 url("data:image/svg+xml,%3Csvg xmlns='http://www.w3.org/2000/svg' viewBox='0 0 11 11'%3E%3Cpath d='M2.500 6 4.500 8 8.500 3' fill='none' stroke='white' stroke-width='1.500'/%3E%3C/svg%3E") center / 11px no-repeat; }
h2 { margin: 0; font-size: 15px; line-height: 20px; font-weight: 600; color: #383838; }
.fold { height: 44px; display: flex; align-items: center; gap: 11px; }
.fold svg { margin-top: 4px; }
.items { padding-top: 11px; padding-bottom: 20px; }
.grid-label { margin: 20px 0 6px; font-size: 12px; line-height: 16px; color: #525252; }
.grid { border: 1px solid #ededed; border-radius: 10px; overflow: hidden; padding-bottom: 2px; }
table { width: 100%; table-layout: fixed; border-collapse: separate; border-spacing: 0; font-size: 12px; }
.c-edge { width: 52px; }
th, td { padding: 0 8px; border-right: 1px solid #ededed; text-align: left; font-weight: 400; overflow: hidden; white-space: nowrap; text-overflow: ellipsis; }
th:last-child, td:last-child { border-right: 0; }
th { height: 30px; background: #f3f3f3; color: #7c7c7c; border-bottom: 1px solid #ededed; }
td { height: 35px; }
th.mid, td.mid { text-align: center; padding: 0; }
.mid svg { margin: 0 auto; }
.mid input { vertical-align: middle; }
.gear { color: #999; }
th.num, td.num { text-align: right; }
.rate { font-weight: 500; }
.soft { color: #525252; }
.code { display: flex; align-items: center; gap: 7px; font-weight: 600; overflow: hidden; }
.code i { width: 8px; height: 8px; border-radius: 50%; background: #16794c; flex: none; }
.row-actions { display: flex; gap: 3px; margin: 12px 0 18px; }
.small { height: 23px; padding: 0 7px; }
.push { margin-left: auto; }

/* scrollbar */
.scrollbar { width: 19px; flex: none; background: #f1f1f1; display: flex; flex-direction: column; align-items: center; padding: 8px 0; }
.arrow { border: 6px solid transparent; }
.up { border-bottom: 7px solid #bbb; border-top: 0; }
.down { border-top: 7px solid #bbb; border-bottom: 0; margin-top: auto; }
.thumb { width: 11px; height: 52%; margin-top: 8px; border-radius: 6px; background: #bdbdbd; }

/* taskbar */
.taskbar { flex: none; height: 50px; display: flex; align-items: stretch; color: #111; font-family: "Open Sans", "Noto Sans", sans-serif; background: linear-gradient(90deg, #d3dad3 0%, #d5dcd0 22%, #dadfc4 32%, #d6dfcc 38%, #cfdedf 43%, #d4dddd 52%, #d6d6d4 58%, #d2d9dc 64%, #cfdbe3 67%, #d9d8d6 73%, #d6dbd9 85%, #dbd9d7 100%); }
.start { width: 60px; }
.win-search { width: 360px; margin-right: 1px; background: #fff; border: 1px solid #c8ccca; display: flex; align-items: center; gap: 15px; padding: 0 12px 0 14px; }
.win-search input { flex: 1; min-width: 0; border: 0; outline: 0; padding: 0; font-size: 18px; background: none; }
.win-search input::placeholder { color: #2b2b2b; opacity: 1; }
.app { position: relative; width: 62px; border: 0; padding: 0; background: none; display: flex; align-items: center; justify-content: center; }
.app.open::after { content: ""; position: absolute; left: 6px; right: 5px; bottom: 0; height: 3px; background: #2a80cf; }
.app.active { background: #eff1f1; }
.app.active::after { left: 0; right: 0; }
.count { position: absolute; width: 20px; height: 20px; border-radius: 50%; border: 1px solid #555; background: #d5dadae0; font-size: 14px; line-height: 18px; text-align: center; }
.app .count { left: 36px; top: 25px; }
.tray { margin-left: auto; display: flex; align-items: center; }
.weather { position: relative; margin-right: 9px; }
.red { position: absolute; right: 0; top: 0; width: 15px; height: 15px; border-radius: 50%; background: #c92a1c; color: #fff; font-size: 11px; line-height: 15px; font-weight: 600; text-align: center; }
.temp { font-size: 17px; }
.sky { margin-left: 11px; }
.caret { margin: 0 11px 0 31px; }
.lang { font-size: 14px; margin-left: 12px; }
.clock { width: 76px; margin: 0 23px 0 16px; display: flex; flex-direction: column; align-items: center; font-size: 14px; line-height: 23px; white-space: nowrap; }
.note { position: relative; width: 20px; margin-right: 26px; }
.note .count { left: 9px; top: 10px; }
.peek { width: 1px; align-self: stretch; background: #8e9494; margin-right: 4px; }
</style>
